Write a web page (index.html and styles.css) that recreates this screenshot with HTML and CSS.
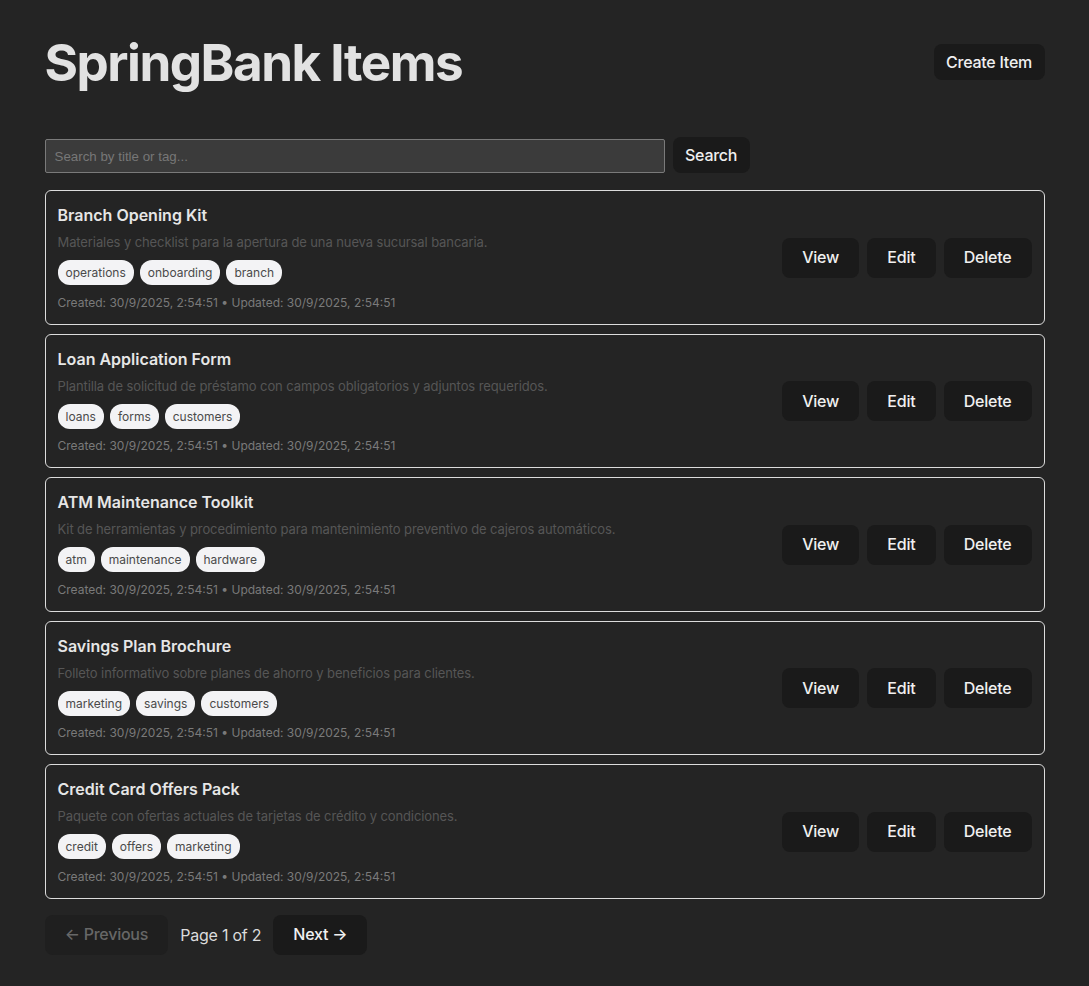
FILE: index.html
```html
<!DOCTYPE html>
<html lang="en">
<head>
<meta charset="utf-8">
<title>SpringBank Items</title>
<link rel="stylesheet" href="styles.css">
</head>
<body>
<main class="container">
  <header class="header">
    <h1 class="title">SpringBank Items</h1>
    <button class="btn btn-sm">Create Item</button>
  </header>

  <form class="search-row">
    <input class="search-input" type="text" placeholder="Search by title or tag...">
    <button class="btn btn-sm" type="button">Search</button>
  </form>

  <ul class="list">
    <li class="card">
      <div class="card-body">
        <h3 class="card-title">Branch Opening Kit</h3>
        <p class="card-desc">Materiales y checklist para la apertura de una nueva sucursal bancaria.</p>
        <div class="tags"><span class="tag">operations</span><span class="tag">onboarding</span><span class="tag">branch</span></div>
        <p class="card-meta">Created: 30/9/2025, 2:54:51 • Updated: 30/9/2025, 2:54:51</p>
      </div>
      <div class="actions"><button class="btn">View</button><button class="btn">Edit</button><button class="btn">Delete</button></div>
    </li>
    <li class="card">
      <div class="card-body">
        <h3 class="card-title">Loan Application Form</h3>
        <p class="card-desc">Plantilla de solicitud de préstamo con campos obligatorios y adjuntos requeridos.</p>
        <div class="tags"><span class="tag">loans</span><span class="tag">forms</span><span class="tag">customers</span></div>
        <p class="card-meta">Created: 30/9/2025, 2:54:51 • Updated: 30/9/2025, 2:54:51</p>
      </div>
      <div class="actions"><button class="btn">View</button><button class="btn">Edit</button><button class="btn">Delete</button></div>
    </li>
    <li class="card">
      <div class="card-body">
        <h3 class="card-title">ATM Maintenance Toolkit</h3>
        <p class="card-desc">Kit de herramientas y procedimiento para mantenimiento preventivo de cajeros automáticos.</p>
        <div class="tags"><span class="tag">atm</span><span class="tag">maintenance</span><span class="tag">hardware</span></div>
        <p class="card-meta">Created: 30/9/2025, 2:54:51 • Updated: 30/9/2025, 2:54:51</p>
      </div>
      <div class="actions"><button class="btn">View</button><button class="btn">Edit</button><button class="btn">Delete</button></div>
    </li>
    <li class="card">
      <div class="card-body">
        <h3 class="card-title">Savings Plan Brochure</h3>
        <p class="card-desc">Folleto informativo sobre planes de ahorro y beneficios para clientes.</p>
        <div class="tags"><span class="tag">marketing</span><span class="tag">savings</span><span class="tag">customers</span></div>
        <p class="card-meta">Created: 30/9/2025, 2:54:51 • Updated: 30/9/2025, 2:54:51</p>
      </div>
      <div class="actions"><button class="btn">View</button><button class="btn">Edit</button><button class="btn">Delete</button></div>
    </li>
    <li class="card">
      <div class="card-body">
        <h3 class="card-title">Credit Card Offers Pack</h3>
        <p class="card-desc">Paquete con ofertas actuales de tarjetas de crédito y condiciones.</p>
        <div class="tags"><span class="tag">credit</span><span class="tag">offers</span><span class="tag">marketing</span></div>
        <p class="card-meta">Created: 30/9/2025, 2:54:51 • Updated: 30/9/2025, 2:54:51</p>
      </div>
      <div class="actions"><button class="btn">View</button><button class="btn">Edit</button><button class="btn">Delete</button></div>
    </li>
  </ul>

  <nav class="pager">
    <button class="btn btn-disabled" disabled>← Previous</button>
    <span class="page-info">Page 1 of 2</span>
    <button class="btn">Next →</button>
  </nav>
</main>
</body>
</html>
```

FILE: styles.css
```css
html, body {
  margin: 0;
  padding: 0;
}

body {
  background: #242424;
  color: rgba(255, 255, 255, 0.87);
  font-family: Inter, "Noto Sans", sans-serif;
  font-size: 16px;
  line-height: 1.5;
  min-height: 986px;
}

.container {
  max-width: 1000px;
  margin: 0 auto;
  padding-top: 34px;
}

.header {
  display: flex;
  align-items: center;
  justify-content: space-between;
  margin-bottom: 46px;
}

.title {
  margin: 0;
  font-size: 51.2px;
  line-height: 1.1;
  font-weight: 700;
  letter-spacing: -1.5px;
  color: #e2e2e2;
}

.btn {
  font-family: Inter, "Noto Sans", sans-serif;
  font-size: 16px;
  font-weight: 500;
  line-height: 19px;
  letter-spacing: -0.25px;
  color: #f0f0f0;
  background: #1a1a1a;
  border: 1px solid transparent;
  border-radius: 8px;
  padding: 9.5px 19.2px;
  cursor: pointer;
}

.btn-sm {
  padding: 7.5px 11.5px;
}

.btn-disabled {
  background: #1f1f1f;
  color: #676767;
  cursor: default;
}

.search-row {
  display: flex;
  align-items: flex-end;
  gap: 8px;
  margin: 0 0 17px 0;
  padding-top: 1px;
}

.search-input {
  width: 620px;
  height: 34px;
  box-sizing: border-box;
  background: #3b3b3b;
  border: 1px solid #7a7a7a;
  border-radius: 2px;
  padding: 0 9px;
  color: #ddd;
  font-family: "Liberation Sans", Arial, sans-serif;
  font-size: 13.33px;
}

.search-input::placeholder {
  color: #777;
}

.list {
  list-style: none;
  margin: 0;
  padding: 0;
  display: flex;
  flex-direction: column;
  gap: 9px;
}

.card {
  display: flex;
  align-items: center;
  justify-content: space-between;
  border: 1px solid #dcdcdc;
  border-radius: 6px;
  padding: 12px;
}

.card-title {
  margin: 0 0 6px 0;
  font-size: 16px;
  line-height: 24px;
  font-weight: 600;
  color: #e6e6e6;
}

.card-desc {
  margin: 0 0 8px 0;
  font-size: 13px;
  line-height: 19px;
  letter-spacing: -0.1px;
  color: #565656;
}

.tags {
  display: flex;
  gap: 6px;
  margin-bottom: 8.5px;
}

.tag {
  background: #f3f3f5;
  color: #4a4a4a;
  font-size: 12px;
  line-height: 17px;
  padding: 4px 8px;
  border-radius: 12px;
}

.card-meta {
  margin: 0;
  font-size: 12px;
  line-height: 18px;
  color: #7a7a7a;
}

.actions {
  display: flex;
  gap: 8px;
}

.pager {
  display: flex;
  align-items: center;
  gap: 12px;
  margin-top: 16px;
}

.page-info {
  font-size: 16px;
  letter-spacing: -0.25px;
  color: #dcdcdc;
}
```
